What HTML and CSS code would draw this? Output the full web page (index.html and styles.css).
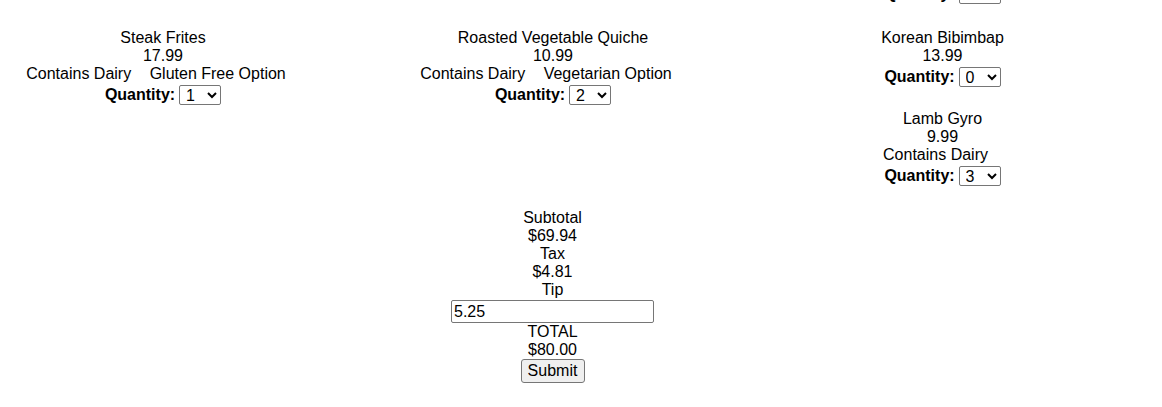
FILE: index.html
```html
<!DOCTYPE html>
<html>
<head>
<meta charset="utf-8">
<link rel="stylesheet" href="styles.css">
</head>
<body>
<div class="page">
  <div class="menu">
    <div class="col col-3 row-1 peek">
      <div class="item">
        <div class="line">Chicken Tikka Masala</div>
        <div class="line">14.99</div>
        <div class="qty"><b>Quantity:</b> <select><option>1</option><option>0</option><option>2</option><option>3</option></select></div>
      </div>
    </div>
    <div class="col col-1 row-2">
      <div class="item">
        <div class="line">Steak Frites</div>
        <div class="line">17.99</div>
        <div class="line"><span class="tag">Contains Dairy</span> <span class="tag">Gluten Free Option</span></div>
        <div class="qty"><b>Quantity:</b> <select><option>0</option><option selected>1</option><option>2</option><option>3</option></select></div>
      </div>
    </div>
    <div class="col col-2 row-2">
      <div class="item">
        <div class="line">Roasted Vegetable Quiche</div>
        <div class="line">10.99</div>
        <div class="line"><span class="tag">Contains Dairy</span> <span class="tag">Vegetarian Option</span></div>
        <div class="qty"><b>Quantity:</b> <select><option>0</option><option>1</option><option selected>2</option><option>3</option></select></div>
      </div>
    </div>
    <div class="col col-3 row-2">
      <div class="item">
        <div class="line">Korean Bibimbap</div>
        <div class="line">13.99</div>
        <div class="qty"><b>Quantity:</b> <select><option selected>0</option><option>1</option><option>2</option><option>3</option></select></div>
      </div>
      <div class="item">
        <div class="line">Lamb Gyro</div>
        <div class="line">9.99</div>
        <div class="line"><span class="tag">Contains Dairy</span></div>
        <div class="qty"><b>Quantity:</b> <select><option>0</option><option>1</option><option>2</option><option selected>3</option></select></div>
      </div>
    </div>
  </div>
  <div class="summary">
    <div class="line">Subtotal</div>
    <div class="line">$69.94</div>
    <div class="line">Tax</div>
    <div class="line">$4.81</div>
    <div class="line">Tip</div>
    <input class="tip" type="text" value="5.25">
    <div class="line">TOTAL</div>
    <div class="line">$80.00</div>
    <button class="submit" type="button">Submit</button>
  </div>
</div>
</body>
</html>
```
FILE: styles.css
```css
html, body {
  background: #fff;
}
body {
  margin: 0 8px 8px;
  font-family: "Liberation Sans", Arial, sans-serif;
  font-size: 16px;
  color: #000;
}
.page {
  width: 1089px;
}
.menu {
  display: grid;
  grid-template-columns: 310px 470px 309px;
  row-gap: 22px;
  align-items: start;
}
.col {
  display: flex;
  flex-direction: column;
  gap: 22px;
  text-align: center;
}
.peek {
  height: 7px;
  overflow: hidden;
  justify-content: flex-end;
}
.peek .item {
  flex-shrink: 0;
  margin-bottom: 2px;
}
.col-1 { grid-column: 1; }
.col-2 { grid-column: 2; }
.col-3 { grid-column: 3; }
.row-1 { grid-row: 1; }
.row-2 { grid-row: 2; }
.line {
  line-height: 18px;
  height: 18px;
}
.tag {
  margin-right: 14px;
}
.qty {
  height: 23px;
  display: flex;
  justify-content: center;
  align-items: center;
  gap: 4px;
  font-weight: bold;
}
.qty select {
  font-family: "Liberation Sans", Arial, sans-serif;
  font-size: 16px;
  width: 42px;
  height: 20px;
  padding: 0 0 0 2px;
  border: 1px solid #767676;
  border-radius: 2px;
  background: #fff;
  color: #000;
  font-weight: normal;
}
.summary {
  margin-top: 22px;
  display: flex;
  flex-direction: column;
  align-items: center;
}
.tip {
  box-sizing: border-box;
  width: 203px;
  height: 23px;
  margin: 1px 0 0;
  padding: 1px 2px;
  border: 1px solid #767676;
  border-radius: 2px;
  font-family: "Liberation Sans", Arial, sans-serif;
  font-size: 16px;
  color: #000;
}
.submit {
  box-sizing: border-box;
  width: 64px;
  height: 24px;
  margin-top: 0;
  padding: 0;
  border: 1px solid #767676;
  border-radius: 3px;
  background: #efefef;
  font-family: "Liberation Sans", Arial, sans-serif;
  font-size: 16px;
  color: #000;
}
```
